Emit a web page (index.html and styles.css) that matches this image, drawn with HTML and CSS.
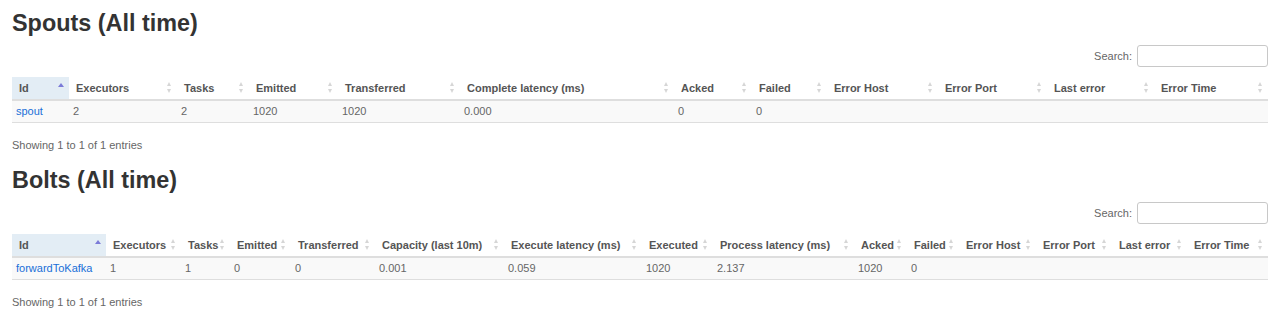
FILE: index.html
```html
<!DOCTYPE html>
<html lang="en">
<head>
<meta charset="utf-8">
<title>Topology summary</title>
<link rel="stylesheet" href="styles.css">
</head>
<body>
<section class="section">
  <h2 class="title">Spouts (All time)</h2>
  <div class="dt-top">
    <label class="search">Search: <input class="search-input" type="search"></label>
  </div>
  <table class="grid spouts">
    <thead>
      <tr>
        <th class="asc">Id</th>
        <th class="sortable">Executors</th>
        <th class="sortable">Tasks</th>
        <th class="sortable">Emitted</th>
        <th class="sortable">Transferred</th>
        <th class="sortable">Complete latency (ms)</th>
        <th class="sortable">Acked</th>
        <th class="sortable">Failed</th>
        <th class="sortable">Error Host</th>
        <th class="sortable">Error Port</th>
        <th class="sortable">Last error</th>
        <th class="sortable">Error Time</th>
      </tr>
    </thead>
    <tbody>
      <tr>
        <td><a class="link" href="#">spout</a></td>
        <td>2</td>
        <td>2</td>
        <td>1020</td>
        <td>1020</td>
        <td>0.000</td>
        <td>0</td>
        <td>0</td>
        <td></td>
        <td></td>
        <td></td>
        <td></td>
      </tr>
    </tbody>
  </table>
  <div class="info">Showing 1 to 1 of 1 entries</div>
</section>

<section class="section second">
  <h2 class="title">Bolts (All time)</h2>
  <div class="dt-top">
    <label class="search">Search: <input class="search-input" type="search"></label>
  </div>
  <table class="grid bolts">
    <thead>
      <tr>
        <th class="asc">Id</th>
        <th class="sortable">Executors</th>
        <th class="sortable">Tasks</th>
        <th class="sortable">Emitted</th>
        <th class="sortable">Transferred</th>
        <th class="sortable">Capacity (last 10m)</th>
        <th class="sortable">Execute latency (ms)</th>
        <th class="sortable">Executed</th>
        <th class="sortable">Process latency (ms)</th>
        <th class="sortable">Acked</th>
        <th class="sortable">Failed</th>
        <th class="sortable">Error Host</th>
        <th class="sortable">Error Port</th>
        <th class="sortable">Last error</th>
        <th class="sortable">Error Time</th>
      </tr>
    </thead>
    <tbody>
      <tr>
        <td><a class="link" href="#">forwardToKafka</a></td>
        <td>1</td>
        <td>1</td>
        <td>0</td>
        <td>0</td>
        <td>0.001</td>
        <td>0.059</td>
        <td>1020</td>
        <td>2.137</td>
        <td>1020</td>
        <td>0</td>
        <td></td>
        <td></td>
        <td></td>
        <td></td>
      </tr>
    </tbody>
  </table>
  <div class="info">Showing 1 to 1 of 1 entries</div>
</section>
</body>
</html>
```

FILE: styles.css
```css
html, body {
  margin: 0;
  padding: 0;
  background: #fff;
}

body {
  padding: 0 12px;
  font-family: "Liberation Sans", Arial, sans-serif;
  color: #666;
  font-size: 11px;
}

.title {
  margin: 11px 0 0;
  font-size: 23.4px;
  line-height: 25px;
  font-weight: bold;
  color: #333;
}

.second .title {
  margin-top: 15px;
}

.dt-top {
  display: flex;
  justify-content: flex-end;
  margin: 9px 0 10px;
}

.search {
  display: flex;
  align-items: center;
  gap: 5px;
  font-size: 11px;
  color: #666;
}

.search-input {
  box-sizing: border-box;
  width: 131px;
  height: 22px;
  margin: 0;
  padding: 2px 4px;
  border: 1px solid #c8c8c8;
  border-radius: 3px;
  background: #fff;
  font: inherit;
}

.grid {
  width: 100%;
  table-layout: fixed;
  border-collapse: collapse;
  border-spacing: 0;
}

.grid th,
.grid td {
  box-sizing: border-box;
}

.grid th {
  position: relative;
  padding: 5px 14px 5px 7px;
  line-height: 12px;
  font-size: 11px;
  font-weight: bold;
  color: #555;
  text-align: left;
  white-space: nowrap;
  border-bottom: 2px solid #dedede;
}

.grid th.asc {
  background: #e3edf5;
}

.grid td {
  padding: 4px 4px;
  line-height: 13px;
  font-size: 11px;
  color: #666;
  background: #f9f9f9;
  border-bottom: 1px solid #dedede;
  white-space: nowrap;
}

.link {
  color: #1a6fd8;
  text-decoration: none;
}

/* sort indicators */
.sortable::before,
.sortable::after,
.asc::before {
  content: "";
  position: absolute;
  right: 6px;
  width: 0;
  height: 0;
  border-left: 2.5px solid transparent;
  border-right: 2.5px solid transparent;
}

.sortable::before {
  top: 50%;
  margin-top: -6px;
  border-bottom: 4px solid #d6d6d6;
}

.sortable::after {
  top: 50%;
  margin-top: 1px;
  border-top: 4px solid #d6d6d6;
}

.asc::before {
  right: 5px;
  top: 50%;
  margin-top: -5px;
  border-left-width: 3px;
  border-right-width: 3px;
  border-bottom: 4px solid #7b7bd8;
}

.info {
  margin-top: 14px;
  line-height: 16px;
  color: #666;
}

/* column widths: spouts */
.spouts th:nth-child(1) { width: 57px; }
.spouts th:nth-child(2) { width: 108px; }
.spouts th:nth-child(3) { width: 72px; }
.spouts th:nth-child(4) { width: 89px; }
.spouts th:nth-child(5) { width: 122px; }
.spouts th:nth-child(6) { width: 214px; }
.spouts th:nth-child(7) { width: 78px; }
.spouts th:nth-child(8) { width: 75px; }
.spouts th:nth-child(9) { width: 111px; }
.spouts th:nth-child(10) { width: 109px; }
.spouts th:nth-child(11) { width: 107px; }
.spouts th:nth-child(12) { width: 114px; }

/* column widths: bolts */
.bolts th:nth-child(1) { width: 94px; }
.bolts th:nth-child(2) { width: 75px; }
.bolts th:nth-child(3) { width: 49px; }
.bolts th:nth-child(4) { width: 61px; }
.bolts th:nth-child(5) { width: 84px; }
.bolts th:nth-child(6) { width: 129px; }
.bolts th:nth-child(7) { width: 138px; }
.bolts th:nth-child(8) { width: 71px; }
.bolts th:nth-child(9) { width: 141px; }
.bolts th:nth-child(10) { width: 53px; }
.bolts th:nth-child(11) { width: 52px; }
.bolts th:nth-child(12) { width: 77px; }
.bolts th:nth-child(13) { width: 76px; }
.bolts th:nth-child(14) { width: 75px; }
.bolts th:nth-child(15) { width: 81px; }
```
